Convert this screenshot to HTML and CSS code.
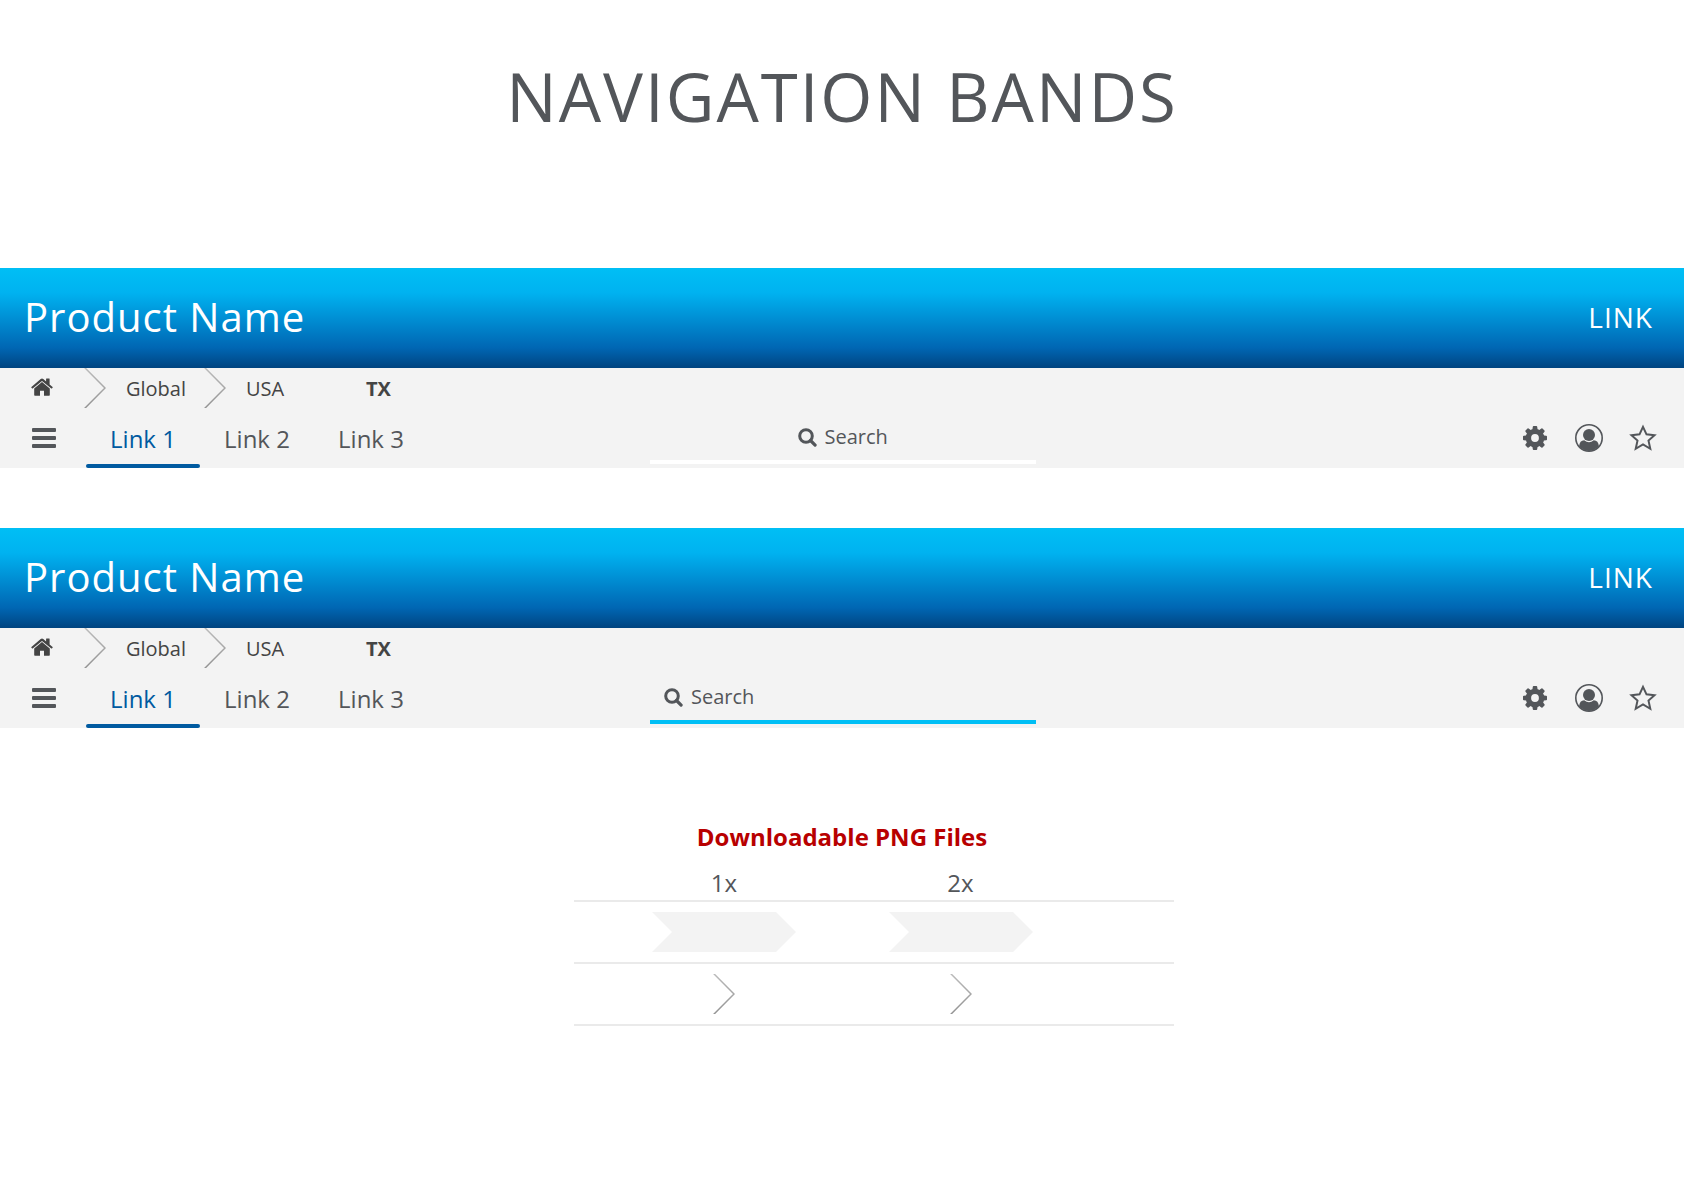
FILE: index.html
```html
<!DOCTYPE html>
<html lang="en">
<head>
<meta charset="utf-8">
<title>Navigation Bands</title>
<link rel="stylesheet" href="styles.css">
</head>
<body>
<svg class="sprite" aria-hidden="true">
  <defs>
    <linearGradient id="fade" x1="0" y1="0" x2="0" y2="40" gradientUnits="userSpaceOnUse">
      <stop offset="0" stop-color="#bbb"/><stop offset="1" stop-color="#939393"/>
    </linearGradient>
    <symbol id="home" viewBox="0 0 22 18">
      <path d="M11 4 3.200 10.500v6.500q0 .7.7.7h5.100v-5h4v5h5.100q.7 0 .7-.7v-6.500z"/>
      <path d="M21.600 8.900 18.600 6.400V.8q0-.4-.4-.4h-2.700q-.4 0-.4.400v2.600L12.300 1q-1.300-1-2.600 0L.4 8.900q-.3.300-.1.600l.8.900q.3.300.6 0L11 2.900l9.300 7.500q.3.300.6 0l.8-.9q.2-.3-.1-.6z"/>
    </symbol>
    <symbol id="menu" viewBox="0 0 24 20">
      <rect width="24" height="4" rx="1"/><rect y="8" width="24" height="4" rx="1"/><rect y="16" width="24" height="4" rx="1"/>
    </symbol>
    <symbol id="search" viewBox="0 0 19 19">
      <circle cx="8" cy="8" r="6.300" fill="none" stroke="currentColor" stroke-width="3"/>
      <path d="m12.500 12.500 4.600 4.600" fill="none" stroke="currentColor" stroke-width="3.200" stroke-linecap="round"/>
    </symbol>
    <symbol id="gear" viewBox="0 0 24 24">
      <path id="tooth" d="M9.200 5 9.800.8q.1-.8.800-.8h2.800q.7 0 .8.800l.6 4.200z"/>
      <use href="#tooth" transform="rotate(45 12 12)"/>
      <use href="#tooth" transform="rotate(90 12 12)"/>
      <use href="#tooth" transform="rotate(135 12 12)"/>
      <use href="#tooth" transform="rotate(180 12 12)"/>
      <use href="#tooth" transform="rotate(225 12 12)"/>
      <use href="#tooth" transform="rotate(270 12 12)"/>
      <use href="#tooth" transform="rotate(315 12 12)"/>
      <circle cx="12" cy="12" r="6.600" fill="none" stroke="currentColor" stroke-width="5.400"/>
    </symbol>
    <symbol id="user" viewBox="0 0 28 28">
      <circle cx="14" cy="14" r="13.200" fill="none" stroke="currentColor" stroke-width="1.600"/>
      <circle cx="14" cy="11" r="6"/>
      <path d="M9.200 16.200Q14 20.200 18.800 16.200q4.600.2 5.100 6Q19.500 27 14 27t-9.900-4.800q.5-5.800 5.100-6z"/>
    </symbol>
    <symbol id="star" viewBox="0 0 28 28">
      <path d="m14 2.800 3.500 7.500 8 .9-6 5.400 1.800 8.200L14 20.500l-7.300 4.300 1.800-8.200-6-5.400 8-.9z" fill="none" stroke="currentColor" stroke-width="2"/>
    </symbol>
    <symbol id="chevron" viewBox="0 0 22 40">
      <path d="M.6-.5 21 20 .6 40.500" fill="none" stroke="url(#fade)" stroke-width="1.500"/>
    </symbol>
    <symbol id="arrow" viewBox="0 0 144 40">
      <path d="M0 0h124l20 20-20 20H0l20-20z" fill="#f3f3f3"/>
    </symbol>
  </defs>
</svg>

<h1 class="title">NAVIGATION BANDS</h1>

<main>
  <section class="band">
    <header class="banner">
      <span class="product">Product Name</span>
      <a class="banner-link" href="#">LINK</a>
    </header>
    <nav class="crumbs" aria-label="Breadcrumb">
      <a class="home" href="#" aria-label="Home"><svg class="icon-home"><use href="#home"/></svg></a>
      <a class="crumb" href="#"><svg class="chevron"><use href="#chevron"/></svg>Global</a>
      <a class="crumb" href="#"><svg class="chevron"><use href="#chevron"/></svg>USA</a>
      <span class="crumb current">TX</span>
    </nav>
    <div class="toolbar">
      <nav class="tabs" aria-label="Main">
        <button class="menu" aria-label="Menu"><svg class="icon-menu"><use href="#menu"/></svg></button>
        <a class="tab active" href="#">Link 1</a>
        <a class="tab" href="#">Link 2</a>
        <a class="tab" href="#">Link 3</a>
      </nav>
      <label class="search">
        <svg class="icon-search" aria-hidden="true"><use href="#search"/></svg>
        <input class="search-input" type="text" placeholder="Search" aria-label="Search">
      </label>
      <div class="actions">
        <button class="action" aria-label="Settings"><svg class="icon-gear"><use href="#gear"/></svg></button>
        <button class="action" aria-label="Account"><svg class="icon-action"><use href="#user"/></svg></button>
        <button class="action" aria-label="Favorites"><svg class="icon-action"><use href="#star"/></svg></button>
      </div>
    </div>
  </section>

  <section class="band">
    <header class="banner">
      <span class="product">Product Name</span>
      <a class="banner-link" href="#">LINK</a>
    </header>
    <nav class="crumbs" aria-label="Breadcrumb">
      <a class="home" href="#" aria-label="Home"><svg class="icon-home"><use href="#home"/></svg></a>
      <a class="crumb" href="#"><svg class="chevron"><use href="#chevron"/></svg>Global</a>
      <a class="crumb" href="#"><svg class="chevron"><use href="#chevron"/></svg>USA</a>
      <span class="crumb current">TX</span>
    </nav>
    <div class="toolbar">
      <nav class="tabs" aria-label="Main">
        <button class="menu" aria-label="Menu"><svg class="icon-menu"><use href="#menu"/></svg></button>
        <a class="tab active" href="#">Link 1</a>
        <a class="tab" href="#">Link 2</a>
        <a class="tab" href="#">Link 3</a>
      </nav>
      <label class="search search-active">
        <svg class="icon-search" aria-hidden="true"><use href="#search"/></svg>
        <input class="search-input" type="text" placeholder="Search" aria-label="Search">
      </label>
      <div class="actions">
        <button class="action" aria-label="Settings"><svg class="icon-gear"><use href="#gear"/></svg></button>
        <button class="action" aria-label="Account"><svg class="icon-action"><use href="#user"/></svg></button>
        <button class="action" aria-label="Favorites"><svg class="icon-action"><use href="#star"/></svg></button>
      </div>
    </div>
  </section>

  <section class="downloads">
    <h2 class="downloads-title">Downloadable PNG Files</h2>
    <div class="files-wrap">
      <table class="files">
        <thead>
          <tr><th scope="col">1x</th><th scope="col">2x</th></tr>
        </thead>
        <tbody>
          <tr>
            <td><a href="#" aria-label="Arrow 1x"><svg class="file-arrow"><use href="#arrow"/></svg></a></td>
            <td><a href="#" aria-label="Arrow 2x"><svg class="file-arrow"><use href="#arrow"/></svg></a></td>
          </tr>
          <tr>
            <td><a href="#" aria-label="Chevron 1x"><svg class="file-chevron"><use href="#chevron"/></svg></a></td>
            <td><a href="#" aria-label="Chevron 2x"><svg class="file-chevron"><use href="#chevron"/></svg></a></td>
          </tr>
        </tbody>
      </table>
    </div>
  </section>
</main>
</body>
</html>
```
FILE: styles.css
```css
* { box-sizing: border-box; }

body {
  margin: 0;
  background: #fff;
  color: #53565a;
  font-family: "Open Sans", sans-serif;
  font-size: 24px;
  line-height: 32px;
}

a { color: inherit; text-decoration: none; }
svg { display: block; fill: currentColor; }
button { padding: 0; border: 0; background: none; color: inherit; cursor: pointer; }

.sprite { position: absolute; width: 0; height: 0; }

.title {
  margin: 0;
  padding: 46px 0 122px;
  font-size: 67px;
  line-height: 100px;
  font-weight: 400;
  letter-spacing: 2px;
  text-align: center;
}

.band { margin-bottom: 60px; background: #f3f3f3; }

.banner {
  display: flex;
  align-items: center;
  justify-content: space-between;
  height: 100px;
  padding: 0 31px 2px 24px;
  color: #fff;
  background: linear-gradient(#00bff5, #00b2f0 25%, #0066b3 80%, #004480);
}

.product { font-size: 40px; letter-spacing: 1px; line-height: 56px; }
.banner-link { font-size: 28px; letter-spacing: 1px; }

.crumbs {
  display: flex;
  height: 40px;
  padding-left: 31px;
  color: #444;
  font-size: 20px;
  line-height: 42px;
}

.home { width: 53px; padding-top: 10px; }
.icon-home { width: 22px; height: 18px; }
.crumb { display: flex; gap: 20px; width: 120px; }
.current { padding-left: 42px; font-weight: 700; }
.chevron { width: 22px; height: 40px; }

.toolbar {
  display: grid;
  grid-template-columns: 1fr 386px 1fr;
  grid-template-rows: 60px;
  padding-left: 2px;
}

.tabs { display: flex; padding-left: 30px; }
.menu { width: 54px; }
.icon-menu { width: 24px; height: 20px; }

.tab {
  position: relative;
  width: 114px;
  height: 60px;
  line-height: 62px;
  text-align: center;
}
.tab.active { color: #005aa0; }
.tab.active::after {
  content: "";
  position: absolute;
  right: 0;
  bottom: 0;
  left: 0;
  height: 4px;
  border-radius: 2px;
  background: #005aa0;
}

.search {
  display: flex;
  align-items: center;
  justify-content: center;
  gap: 8px;
  height: 56px;
  padding-top: 6px;
  border-bottom: 4px solid #fff;
}
.search-active { padding-left: 14px; border-color: #00bff5; }

.icon-search { width: 19px; height: 19px; }

.search-input {
  width: 64px;
  height: 32px;
  padding: 0;
  border: 0;
  outline: 0;
  background: none;
  color: inherit;
  font: inherit;
  font-size: 20px;
}
.search-input::placeholder { color: inherit; opacity: 1; }
.search-active .search-input { flex: 1; }

.actions {
  display: flex;
  align-items: center;
  justify-content: flex-end;
  gap: 26px;
  padding-right: 27px;
}
.action { display: grid; place-items: center; width: 28px; height: 28px; }
.icon-action { width: 28px; height: 28px; }
.icon-gear { width: 24px; height: 24px; }

.downloads { padding-top: 31px; }

.downloads-title {
  margin: 0;
  color: #b80000;
  font-size: 24px;
  font-weight: 700;
  line-height: 36px;
  text-align: center;
}

.files-wrap { width: 664px; max-width: 100%; margin: 8px auto 0; padding-left: 64px; }
.files { width: 100%; table-layout: fixed; border-collapse: collapse; }
.files tr { border-bottom: 2px solid #eaeaea; }
.files th { height: 38px; padding: 2px 0 0; font-weight: 400; text-align: center; }
.files td { height: 62px; padding: 0; }
.files th:first-child { width: 268px; }
.files th:first-child, .files td:first-child { padding-left: 32px; }
.files th:last-child, .files td:last-child { padding-right: 95px; }
.file-arrow { width: 144px; height: 40px; margin: 0 auto; }
.file-chevron { width: 22px; height: 40px; margin: 0 auto; }
```
